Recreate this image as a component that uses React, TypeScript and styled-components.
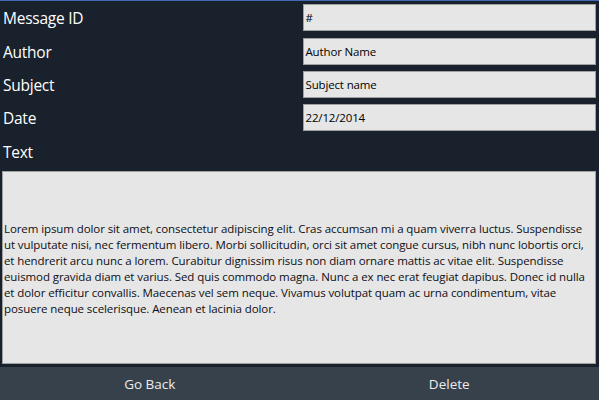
import React from "react";
import styled, { createGlobalStyle } from "styled-components";

const GlobalStyle = createGlobalStyle`
  html, body { margin: 0; padding: 0; background: #19212c; }
  body { font-family: "Open Sans", "Noto Sans", "Liberation Sans", sans-serif; }
  * { box-sizing: border-box; }
`;

const Page = styled.div`
  width: 599px;
  height: 400px;
  display: flex;
  flex-direction: column;
  background: #19212c;
  border-top: 1px solid #4169b5;
  overflow: hidden;
`;

const Form = styled.div`
  flex: 1;
  display: flex;
  flex-direction: column;
  min-height: 0;
`;

const Row = styled.div`
  height: 33.4px;
  display: grid;
  grid-template-columns: 299.5px 1fr;
  align-items: center;
  flex-shrink: 0;
`;

const Label = styled.div`
  color: #ffffff;
  font-size: 15.5px;
  padding-left: 3px;
  padding-top: 1px;
  letter-spacing: -0.25px;
`;

const Field = styled.div`
  margin: 0 3px 0 3px;
  height: 27px;
  background: #e6e6e6;
  border: 1px solid #a0a0a0;
  color: #000;
  font-size: 11.5px;
  letter-spacing: -0.15px;
  display: flex;
  align-items: center;
  padding-left: 2px;
`;

const TextArea = styled.div`
  margin: 3px 3px 3px 2px;
  flex: 1;
  background: #e6e6e6;
  border: 1px solid #a0a0a0;
  display: flex;
  align-items: center;
  padding-left: 1px;
  padding-top: 3px;
`;

const Body = styled.p`
  margin: 0;
  color: #0e0e14;
  font-size: 11.5px;
  letter-spacing: -0.09px;
  line-height: 16px;
  white-space: nowrap;
`;

const BottomBar = styled.div`
  height: 33px;
  flex-shrink: 0;
  display: grid;
  grid-template-columns: 1fr 1fr;
  background: #37414c;
`;

const BarButton = styled.button`
  background: transparent;
  border: none;
  color: #ececec;
  font-family: inherit;
  font-size: 13.5px;
  letter-spacing: 0px;
  display: flex;
  align-items: center;
  justify-content: center;
  cursor: pointer;
  padding: 0;
`;

const fields: [string, string][] = [
  ["Message ID", "#"],
  ["Author", "Author Name"],
  ["Subject", "Subject name"],
  ["Date", "22/12/2014"],
];

const lines = [
  "Lorem ipsum dolor sit amet, consectetur adipiscing elit. Cras accumsan mi a quam viverra luctus. Suspendisse",
  "ut vulputate nisi, nec fermentum libero. Morbi sollicitudin, orci sit amet congue cursus, nibh nunc lobortis orci,",
  "et hendrerit arcu nunc a lorem. Curabitur dignissim risus non diam ornare mattis ac vitae elit. Suspendisse",
  "euismod gravida diam et varius. Sed quis commodo magna. Nunc a ex nec erat feugiat dapibus. Donec id nulla",
  "et dolor efficitur convallis. Maecenas vel sem neque. Vivamus volutpat quam ac urna condimentum, vitae",
  "posuere neque scelerisque. Aenean et lacinia dolor.",
];

export default function App() {
  return (
    <>
      <GlobalStyle />
      <Page>
        <Form>
          {fields.map(([label, value]) => (
            <Row key={label}>
              <Label>{label}</Label>
              <Field>{value}</Field>
            </Row>
          ))}
          <Row>
            <Label>Text</Label>
          </Row>
          <TextArea>
            <Body>
              {lines.map((l, i) => (
                <React.Fragment key={i}>
                  {l}
                  {i < lines.length - 1 && <br />}
                </React.Fragment>
              ))}
            </Body>
          </TextArea>
        </Form>
        <BottomBar>
          <BarButton>Go Back</BarButton>
          <BarButton>Delete</BarButton>
        </BottomBar>
      </Page>
    </>
  );
}
